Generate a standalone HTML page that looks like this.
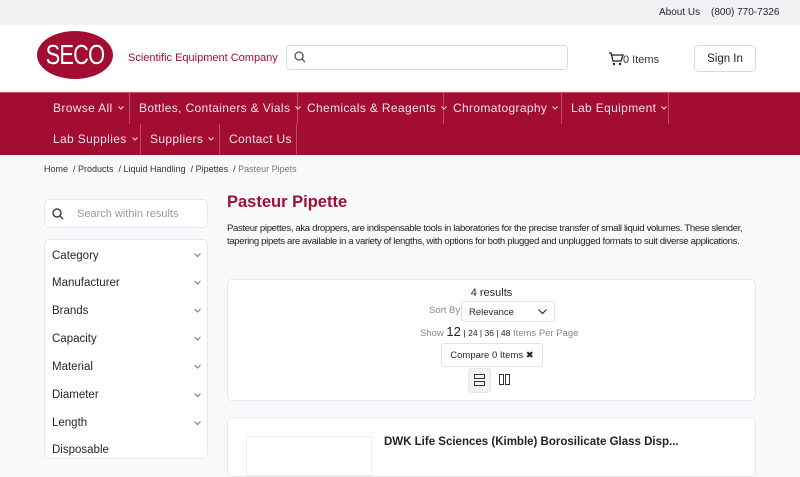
<!DOCTYPE html><html><head><style>
*{box-sizing:border-box;margin:0;padding:0}
body{width:800px;height:450px;overflow:hidden;background:#f8f9fa;font-family:"Liberation Sans",sans-serif;color:#1f2430;position:relative}
.abs{position:absolute}
.top{left:0;top:0;width:800px;height:25px;background:#f1f2f4;font-size:10px}
.hdr{left:0;top:25px;width:800px;height:67px;background:#fff}
.nav{left:0;top:92px;width:800px;height:63px;background:#a30d32;border-top:1px solid #c95670}
.ni{position:absolute;color:#f3e3e7;font-size:12px;letter-spacing:.35px;border-right:1px solid #c04a65;height:31px;line-height:31px;padding-left:10px;white-space:nowrap}
.ni svg{margin-left:5px;vertical-align:2px}
.card{background:#fff;border:1px solid #e6e8eb;border-radius:5px}
.f{position:absolute;left:7px;font-size:11.5px;color:#1f2430}
.chev{position:absolute;left:149px}
</style></head><body>
<div class="abs top"><span class="abs" style="left:659px;top:7px">About Us</span><span class="abs" style="left:711px;top:7px">(800) 770-7326</span></div>
<div class="abs hdr">
<div class="abs" style="left:37px;top:6px;width:76px;height:48px;border-radius:50%;background:#a30d32"></div>
<div class="abs" style="left:37px;top:6px;width:76px;height:48px;color:#fff;font-size:28px;line-height:48px;text-align:center;letter-spacing:-1px;transform:scaleX(.78)">SECO</div>
<span class="abs" style="left:128px;top:27px;font-size:11px;color:#a30d32">Scientific Equipment Company</span>
<div class="abs" style="left:286px;top:20px;width:282px;height:25px;border:1px solid #d8dadd;border-radius:4px"><svg class="abs" style="left:7px;top:5px" width="12" height="12" viewBox="0 0 12 12"><circle cx="5" cy="5" r="4" fill="none" stroke="#555" stroke-width="1.3"/><path d="M8 8l3 3" stroke="#555" stroke-width="1.3"/></svg></div>
<svg class="abs" style="left:608px;top:27px" width="16" height="14" viewBox="0 0 16 14"><path d="M1 1h2l2 8h8l2-6H4" fill="none" stroke="#222" stroke-width="1.3"/><circle cx="6" cy="12" r="1.2" fill="#222"/><circle cx="12" cy="12" r="1.2" fill="#222"/></svg>
<span class="abs" style="left:623px;top:29px;font-size:11px;color:#333">0 Items</span>
<div class="abs" style="left:694px;top:20px;width:62px;height:27px;border:1px solid #d8dadd;border-radius:5px;font-size:11.5px;text-align:center;line-height:26px">Sign In</div>
</div>
<div class="abs nav">
<div class="ni" style="left:43px;top:0;width:87px">Browse All<svg width="6" height="4"><path d="M.5 .5l2.5 2.5 2.5-2.5" fill="none" stroke="#f3e3e7"/></svg></div>
<div class="ni" style="left:129px;top:0;width:169px">Bottles, Containers &amp; Vials<svg width="6" height="4"><path d="M.5 .5l2.5 2.5 2.5-2.5" fill="none" stroke="#f3e3e7"/></svg></div>
<div class="ni" style="left:297px;top:0;width:147px">Chemicals &amp; Reagents<svg width="6" height="4"><path d="M.5 .5l2.5 2.5 2.5-2.5" fill="none" stroke="#f3e3e7"/></svg></div>
<div class="ni" style="left:443px;top:0;width:119px">Chromatography<svg width="6" height="4"><path d="M.5 .5l2.5 2.5 2.5-2.5" fill="none" stroke="#f3e3e7"/></svg></div>
<div class="ni" style="left:561px;top:0;width:108px">Lab Equipment<svg width="6" height="4"><path d="M.5 .5l2.5 2.5 2.5-2.5" fill="none" stroke="#f3e3e7"/></svg></div>
<div class="ni" style="left:43px;top:31px;width:98px">Lab Supplies<svg width="6" height="4"><path d="M.5 .5l2.5 2.5 2.5-2.5" fill="none" stroke="#f3e3e7"/></svg></div>
<div class="ni" style="left:140px;top:31px;width:80px">Suppliers<svg width="6" height="4"><path d="M.5 .5l2.5 2.5 2.5-2.5" fill="none" stroke="#f3e3e7"/></svg></div>
<div class="ni" style="left:219px;top:31px;width:78px">Contact Us</div>
</div>
<div class="abs" style="left:44px;top:164px;font-size:9px;color:#333;white-space:nowrap">Home &nbsp;/ Products &nbsp;/ Liquid Handling &nbsp;/ Pipettes &nbsp;/ <span style="color:#777">Pasteur Pipets</span></div>
<div class="abs card" style="left:44px;top:199px;width:164px;height:29px"><svg class="abs" style="left:7px;top:8px" width="12" height="12" viewBox="0 0 12 12"><circle cx="5" cy="5" r="4" fill="none" stroke="#444" stroke-width="1.5"/><path d="M8 8l3 3" stroke="#444" stroke-width="1.5"/></svg><span class="abs" style="left:32px;top:8px;font-size:11px;color:#999">Search within results</span></div>
<div class="abs card" style="left:44px;top:239px;width:164px;height:220px">
<span class="f" style="top:10px">Category</span>
<span class="f" style="top:37px">Manufacturer</span>
<span class="f" style="top:65px">Brands</span>
<span class="f" style="top:93px">Capacity</span>
<span class="f" style="top:121px">Material</span>
<span class="f" style="top:149px">Diameter</span>
<span class="f" style="top:177px">Length</span>
<span class="f" style="top:204px">Disposable</span>
<svg class="chev" style="top:13px" width="8" height="120"><g fill="none" stroke="#777"><path d="M.5 .5l3 3 3-3"/><path d="M.5 28l3 3 3-3"/><path d="M.5 56l3 3 3-3"/><path d="M.5 84l3 3 3-3"/><path d="M.5 112l3 3 3-3"/></g></svg>
<svg class="chev" style="top:153px" width="8" height="40"><g fill="none" stroke="#777"><path d="M.5 .5l3 3 3-3"/><path d="M.5 28.5l3 3 3-3"/></g></svg>
</div>
<div class="abs" style="left:227px;top:193px;font-size:16.5px;font-weight:bold;color:#a30d32">Pasteur Pipette</div>
<div class="abs" style="left:227px;top:222px;font-size:9.6px;letter-spacing:-0.35px;line-height:13px;color:#222;white-space:nowrap">Pasteur pipettes, aka droppers, are indispensable tools in laboratories for the precise transfer of small liquid volumes. These slender,<br>tapering pipets are available in a variety of lengths, with options for both plugged and unplugged formats to suit diverse applications.</div>
<div class="abs card" style="left:227px;top:279px;width:529px;height:122px">
<div class="abs" style="left:0;width:527px;top:7px;text-align:center;font-size:11px">4 results</div>
<span class="abs" style="left:201px;top:25px;font-size:9.5px;color:#888">Sort By</span>
<div class="abs" style="left:233px;top:21px;width:94px;height:21px;border:1px solid #e2e4e7;border-radius:3px;font-size:9.5px;padding:5px 7px">Relevance<svg style="position:absolute;right:7px;top:7px" width="9" height="6"><path d="M.5 .5l4 4 4-4" fill="none" stroke="#333" stroke-width="1.2"/></svg></div>
<div class="abs" style="left:192px;top:44px;font-size:9.5px;color:#888;white-space:nowrap">Show <span style="font-size:13px;color:#222">12</span> <span style="color:#222;font-size:8.5px">| 24 | 36 | 48</span> Items Per Page</div>
<div class="abs" style="left:213px;top:63px;width:102px;height:24px;border:1px solid #e2e4e7;border-radius:3px;font-size:9.5px;text-align:center;line-height:23px">Compare 0 Items ✖</div>
<div class="abs" style="left:240px;top:88px;width:23px;height:25px;background:#f1f2f4;border:1px solid #e6e8eb;border-radius:4px"><div class="abs" style="left:5px;top:5px;width:11px;height:5px;border:1.3px solid #333"></div><div class="abs" style="left:5px;top:12px;width:11px;height:5px;border:1.3px solid #333"></div></div>
<div class="abs" style="left:271px;top:94px;width:5px;height:11px;border:1.3px solid #333"></div><div class="abs" style="left:277px;top:94px;width:5px;height:11px;border:1.3px solid #333"></div>
</div>
<div class="abs card" style="left:227px;top:417px;width:529px;height:60px">
<div class="abs" style="left:18px;top:18px;width:126px;height:40px;border:1px solid #eee"></div>
<div class="abs" style="left:156px;top:18px;font-size:11.5px;font-weight:bold;color:#222">DWK Life Sciences (Kimble) Borosilicate Glass Disp...</div>
</div>
</body></html>
